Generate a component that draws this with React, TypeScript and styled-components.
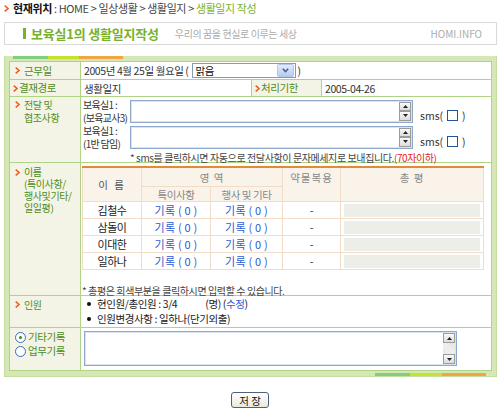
import React from "react";
import styled, { createGlobalStyle } from "styled-components";

const colors = {
  text: "#333333",
  green: "#79b12c",
  labelGreen: "#4f8c1c",
  line: "#afd487",
  frame: "#d4e7b5",
  frameEdge: "#c4dca0",
  labelBg: "#f4f4e6",
  arrow: "#f0601e",
  blue: "#2a5bd0",
  gray: "#ababab",
  fieldBorder: "#8ea8cc",
  thBg: "#faf3ea",
  thLine: "#f0dcc8",
  thTop: "#e5883a",
};

const GlobalStyle = createGlobalStyle`
  html, body {
    margin: 0;
    padding: 0;
    background: #fff;
  }
  body {
    font-family: "Noto Sans CJK KR", "Noto Sans", sans-serif;
    font-size: 10.5px;
    line-height: 13px;
    letter-spacing: -0.4px;
    color: ${colors.text};
  }
`;

const Page = styled.div`
  width: 493px;
  padding-left: 4px;
`;

const Breadcrumb = styled.div`
  display: flex;
  align-items: center;
  gap: 4px;
  height: 17px;
  font-size: 11px;
  color: #444;
`;

const Here = styled.b`
  color: #111;
`;

const Current = styled.span`
  color: ${colors.green};
`;

const TitleBox = styled.div`
  display: flex;
  align-items: center;
  height: 21px;
  margin-top: 5px;
  padding: 0 14px 0 18px;
  border: 1px solid #dadada;
`;

const TitleBar = styled.span`
  width: 3px;
  height: 11px;
  background: ${colors.green};
  margin-right: 5px;
`;

const Title = styled.span`
  font-size: 13px;
  font-weight: bold;
  color: ${colors.green};
  letter-spacing: -0.2px;
`;

const Slogan = styled.span`
  margin-left: 16px;
  font-size: 10px;
  color: ${colors.gray};
`;

const Brand = styled.span`
  margin-left: auto;
  font-size: 10px;
  color: ${colors.gray};
  letter-spacing: 0;
`;

const Frame = styled.div`
  margin-top: 11px;
  padding: 0 4px;
  background: ${colors.frame};
  border: 1px solid ${colors.frameEdge};
  border-top: none;
`;

const Stripes = styled.div<{ $end?: boolean }>`
  display: flex;
  height: 5px;
  align-items: ${(p) => (p.$end ? "flex-end" : "flex-start")};
  justify-content: ${(p) => (p.$end ? "flex-end" : "flex-start")};
  padding: ${(p) => (p.$end ? "0 6px 0 0" : "0 0 0 4px")};
`;

const Stripe = styled.span<{ $color: string; $w: number }>`
  width: ${(p) => p.$w}px;
  height: 3px;
  background: ${(p) => p.$color};
`;

const Sheet = styled.div`
  background: #fff;
  border: 1px solid ${colors.line};
`;

const Row = styled.div<{ $h: number }>`
  display: flex;
  height: ${(p) => p.$h}px;
  & + & {
    border-top: 1px solid ${colors.line};
  }
`;

const Label = styled.div<{ $top?: number; $w?: number; $tight?: boolean }>`
  display: flex;
  align-items: ${(p) => (p.$top !== undefined ? "flex-start" : "center")};
  gap: ${(p) => (p.$tight ? 1 : 4)}px;
  width: ${(p) => p.$w ?? 71}px;
  flex: none;
  padding: ${(p) => p.$top ?? 0}px 0 0 ${(p) => (p.$tight ? 3 : 5)}px;
  box-sizing: border-box;
  background: ${colors.labelBg};
  border-right: 1px solid ${colors.line};
  color: ${colors.labelGreen};
  font-size: 10.5px;
  line-height: 12px;
`;

const ArrowBox = styled.span<{ $lh?: number }>`
  display: flex;
  align-items: center;
  height: ${(p) => p.$lh ?? 12}px;
`;

const LabelLines = styled.div<{ $lh?: number }>`
  font-size: 10px;
  line-height: ${(p) => p.$lh ?? 12}px;
`;

const Cell = styled.div<{ $w?: number; $pad?: string }>`
  display: flex;
  align-items: center;
  ${(p) => (p.$w ? `width: ${p.$w}px; flex: none;` : "flex: 1;")}
  padding: ${(p) => p.$pad ?? "0 0 0 3px"};
  box-sizing: border-box;
  min-width: 0;
`;

const SubLabel = styled(Label)`
  border-left: 1px solid ${colors.line};
`;

const Select = styled.div`
  display: inline-flex;
  align-items: center;
  justify-content: space-between;
  width: 104px;
  height: 15px;
  margin: 0 2px 0 3px;
  padding: 0 1px 0 3px;
  box-sizing: border-box;
  border: 1px solid #7f9db9;
  color: #111;
`;

const DropButton = styled.span`
  display: flex;
  align-items: center;
  justify-content: center;
  width: 15px;
  height: 11px;
  border: 1px solid #b3c6ec;
  border-radius: 2px;
  background: linear-gradient(#e3ebfc, #b7cbf3);
`;

const Stack = styled.div`
  display: flex;
  flex-direction: column;
  flex: 1;
  padding: 1px 0 0 2px;
`;

const SubRow = styled.div`
  display: flex;
  align-items: center;
  height: 26px;
`;

const Who = styled.div`
  width: 47px;
  flex: none;
  font-size: 10px;
  line-height: 13px;
  letter-spacing: -0.7px;
  white-space: nowrap;
  color: #333;
`;

const Field = styled.div<{ $w: number; $h: number }>`
  display: flex;
  justify-content: flex-end;
  width: ${(p) => p.$w}px;
  height: ${(p) => p.$h}px;
  box-sizing: border-box;
  border: 1px solid ${colors.fieldBorder};
  box-shadow: inset 0 0 0 1px #d9e3f2;
  padding: 1px;
  background: #fff;
`;

const ScrollTrack = styled.div`
  display: flex;
  flex-direction: column;
  justify-content: space-between;
  width: 12px;
  background: repeating-linear-gradient(45deg, #f2f2f2 0 1px, #e4e4e4 1px 2px);
`;

const ScrollButton = styled.span`
  display: flex;
  align-items: center;
  justify-content: center;
  height: 10px;
  box-sizing: border-box;
  border: 1px solid #9c9c9c;
  background: linear-gradient(#fafafa, #dcdcdc);
`;

const Sms = styled.span`
  display: flex;
  align-items: center;
  gap: 2px;
  align-self: flex-end;
  margin: 0 0 2px 7px;
  color: #333;
  letter-spacing: 0;
`;

const Check = styled.span`
  width: 9px;
  height: 9px;
  border: 1px solid #1f5592;
  background: #fff;
  margin: 0 2px;
`;

const Note = styled.div<{ $indent?: number }>`
  padding-left: ${(p) => p.$indent ?? 0}px;
  margin-top: 2px;
  color: #444;
  font-size: 10px;
  line-height: 12px;
  white-space: nowrap;
`;

const Red = styled.span`
  color: #e8241c;
`;

const TableCell = styled.div`
  display: flex;
  flex-direction: column;
  flex: 1;
  padding: 3px 7px 0 1px;
`;

const Grid = styled.table`
  width: 402px;
  border-collapse: collapse;
  border-top: 2px solid ${colors.thTop};
  table-layout: fixed;
`;

const Th = styled.th<{ $top?: boolean; $dark?: boolean }>`
  height: 14px;
  padding: ${(p) => (p.$top ? "3px 0 0" : "0")};
  vertical-align: ${(p) => (p.$top ? "top" : "middle")};
  background: ${colors.thBg};
  border: 1px solid ${colors.thLine};
  border-top: none;
  font-weight: normal;
  font-size: 10.5px;
  line-height: 13px;
  color: ${(p) => (p.$dark ? "#555" : "#888")};
  letter-spacing: ${(p) => (p.$top ? "1px" : "-0.4px")};
`;

const Td = styled.td`
  height: 16px;
  padding: 0;
  text-align: center;
  border: 1px solid ${colors.thLine};
  font-size: 11px;
  line-height: 16px;
`;

const Name = styled.span`
  color: #222;
`;

const Record = styled.span`
  color: ${colors.blue};
  letter-spacing: 0.2px;
`;

const Memo = styled.div`
  height: 13px;
  margin: 0 3px;
  background: #eeeee8;
`;

const Bullets = styled.ul`
  margin: 0;
  padding: 0 0 0 3px;
  list-style: none;
  line-height: 15px;
  font-size: 10.5px;
  color: #222;
`;

const Bullet = styled.li`
  display: flex;
  align-items: center;
  &::before {
    content: "";
    width: 4px;
    height: 4px;
    border-radius: 50%;
    background: #111;
    margin-right: 6px;
  }
`;

const Gap = styled.span<{ $w: number }>`
  display: inline-block;
  width: ${(p) => p.$w}px;
`;

const Link = styled.span`
  color: ${colors.blue};
`;

const Radios = styled.div`
  display: flex;
  flex-direction: column;
  line-height: 14px;
`;

const RadioRow = styled.label`
  display: flex;
  align-items: center;
  gap: 2px;
`;

const Radio = styled.span<{ $on?: boolean }>`
  display: flex;
  align-items: center;
  justify-content: center;
  width: 9px;
  height: 9px;
  border: 1px solid #3c6eb4;
  border-radius: 50%;
  background: #fff;
  &::after {
    content: "";
    width: 3px;
    height: 3px;
    border-radius: 50%;
    background: ${(p) => (p.$on ? "#2f8a1c" : "transparent")};
  }
`;

const ButtonRow = styled.div`
  display: flex;
  justify-content: center;
  margin-top: 15px;
  padding-right: 1px;
`;

const SaveButton = styled.button`
  width: 38px;
  height: 16px;
  padding: 0;
  border: 1px solid #4f5f7d;
  border-radius: 3px;
  background: linear-gradient(#ffffff, #ebe8dc);
  font-family: inherit;
  font-size: 10.5px;
  line-height: 13px;
  color: #111;
`;

const Arrow = () => (
  <svg width="5" height="7" viewBox="0 0 5 7">
    <path d="M0.7 0.6 L4 3.5 L0.7 6.4" fill="none" stroke={colors.arrow} strokeWidth="1.6" />
  </svg>
);

const Tri = ({ up }: { up?: boolean }) => (
  <svg width="5" height="3" viewBox="0 0 5 3">
    <path d={up ? "M0 3 L2.5 0 L5 3 Z" : "M0 0 L2.5 3 L5 0 Z"} fill="#222" />
  </svg>
);

const Chevron = () => (
  <svg width="7" height="5" viewBox="0 0 7 5">
    <path d="M0.8 0.8 L3.5 3.6 L6.2 0.8" fill="none" stroke="#4a5d86" strokeWidth="1.5" />
  </svg>
);

const TextBox = ({ w, h }: { w: number; h: number }) => (
  <Field $w={w} $h={h}>
    <ScrollTrack>
      <ScrollButton>
        <Tri up />
      </ScrollButton>
      <ScrollButton>
        <Tri />
      </ScrollButton>
    </ScrollTrack>
  </Field>
);

const people = ["김철수", "삼돌이", "이대한", "일하나"];

const messengers = [
  { room: "보육실1 :", role: "(보육교사3)" },
  { room: "보육실1 :", role: "(1반 담임)" },
];

export default function App() {
  return (
    <Page>
      <GlobalStyle />
      <Breadcrumb>
        <Arrow />
        <span>
          <Here>현재위치</Here> : HOME &gt; 일상생활 &gt; 생활일지 &gt; <Current>생활일지 작성</Current>
        </span>
      </Breadcrumb>

      <TitleBox>
        <TitleBar />
        <Title>보육실1의 생활일지작성</Title>
        <Slogan>우리의 꿈을 현실로 이루는 세상</Slogan>
        <Brand>HOMI.INFO</Brand>
      </TitleBox>

      <Frame>
        <Stripes>
          <Stripe $color="#7fcf7c" $w={35} />
          <Stripe $color="#c6e22c" $w={31} />
          <Stripe $color="#f2a544" $w={44} />
        </Stripes>
        <Sheet>
          <Row $h={17}>
            <Label>
              <Arrow />
              근무일
            </Label>
            <Cell>
              2005년 4월 25일 월요일 (
              <Select>
                맑음
                <DropButton>
                  <Chevron />
                </DropButton>
              </Select>
              )
            </Cell>
          </Row>

          <Row $h={16}>
            <Label $tight>
              <Arrow />
              결재경로
            </Label>
            <Cell $w={170}>생활일지</Cell>
            <SubLabel $w={71} $tight>
              <Arrow />
              처리기한
            </SubLabel>
            <Cell $pad="0 0 0 3px">2005-04-26</Cell>
          </Row>

          <Row $h={65}>
            <Label $top={1}>
              <ArrowBox $lh={13}>
                <Arrow />
              </ArrowBox>
              <LabelLines $lh={13}>
                전달 및
                <br />
                협조사항
              </LabelLines>
            </Label>
            <Stack>
              {messengers.map((m) => (
                <SubRow key={m.role}>
                  <Who>
                    {m.room}
                    <br />
                    {m.role}
                  </Who>
                  <TextBox w={283} h={23} />
                  <Sms>
                    sms(<Check />)
                  </Sms>
                </SubRow>
              ))}
              <Note $indent={47}>
                * sms를 클릭하시면 자동으로 전달사항이 문자메세지로 보내집니다.<Red>(70자이하)</Red>
              </Note>
            </Stack>
          </Row>

          <Row $h={132}>
            <Label $top={3}>
              <ArrowBox>
                <Arrow />
              </ArrowBox>
              <LabelLines>
                이름
                <br />
                (특이사항/
                <br />
                행사및기타/
                <br />
                일일평)
              </LabelLines>
            </Label>
            <TableCell>
              <Grid>
                <colgroup>
                  <col style={{ width: 59 }} />
                  <col style={{ width: 69 }} />
                  <col style={{ width: 72 }} />
                  <col style={{ width: 58 }} />
                  <col />
                </colgroup>
                <thead>
                  <tr>
                    <Th rowSpan={2} $dark style={{ letterSpacing: 2 }}>
                      이 름
                    </Th>
                    <Th colSpan={2} $top style={{ height: 15 }}>
                      영 역
                    </Th>
                    <Th rowSpan={2} $top>
                      약물복용
                    </Th>
                    <Th rowSpan={2} $top>
                      총 평
                    </Th>
                  </tr>
                  <tr>
                    <Th>특이사항</Th>
                    <Th>행사 및 기타</Th>
                  </tr>
                </thead>
                <tbody>
                  {people.map((p) => (
                    <tr key={p}>
                      <Td>
                        <Name>{p}</Name>
                      </Td>
                      <Td>
                        <Record>기록 ( 0 )</Record>
                      </Td>
                      <Td>
                        <Record>기록 ( 0 )</Record>
                      </Td>
                      <Td>-</Td>
                      <Td>
                        <Memo />
                      </Td>
                    </tr>
                  ))}
                </tbody>
              </Grid>
              <Note style={{ marginTop: 15 }}>* 총평은 회색부분을 클릭하시면 입력할 수 있습니다.</Note>
            </TableCell>
          </Row>

          <Row $h={31}>
            <Label $top={2}>
              <ArrowBox $lh={13}>
                <Arrow />
              </ArrowBox>
              <LabelLines $lh={13}>인원</LabelLines>
            </Label>
            <Cell $pad="0 0 0 3px" style={{ alignItems: "flex-start" }}>
              <Bullets>
                <Bullet>
                  현인원/총인원 : 3/4
                  <Gap $w={28} />
                  (명) (<Link>수정</Link>)
                </Bullet>
                <Bullet>인원변경사항 : 일하나(단기외출)</Bullet>
              </Bullets>
            </Cell>
          </Row>

          <Row $h={42}>
            <Label $top={2}>
              <Radios>
                <RadioRow>
                  <Radio $on />
                  기타기록
                </RadioRow>
                <RadioRow>
                  <Radio />
                  업무기록
                </RadioRow>
              </Radios>
            </Label>
            <Cell $pad="3px 0 0 3px" style={{ alignItems: "flex-start" }}>
              <TextBox w={373} h={35} />
            </Cell>
          </Row>
        </Sheet>
        <Stripes $end>
          <Stripe $color="#7fcf7c" $w={35} />
          <Stripe $color="#c6e22c" $w={32} />
          <Stripe $color="#f2a544" $w={44} />
        </Stripes>
      </Frame>

      <ButtonRow>
        <SaveButton>저 장</SaveButton>
      </ButtonRow>
    </Page>
  );
}
